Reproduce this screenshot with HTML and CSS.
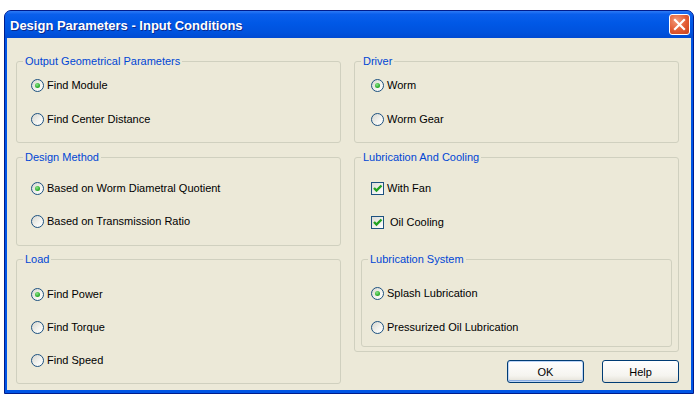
FILE: index.html
```html
<!DOCTYPE html>
<html lang="en">
<head>
  <meta charset="UTF-8" />
  <title>Design Parameters - Input Conditions</title>
  <link rel="stylesheet" href="styles.css">
</head>
<body>
  <div class="window">
    <div class="titlebar">
      <span class="title">Design Parameters - Input Conditions</span>
      <span class="close">
        <svg width="13" height="13" viewBox="0 0 13 13">
          <path d="M2 2 L11 11 M11 2 L2 11" stroke="#fff" stroke-width="2.2" stroke-linecap="square" fill="none"/>
        </svg>
      </span>
    </div>

    <div class="content">
      <div class="column">
        <div class="group g-output">
          <span class="legend">Output Geometrical Parameters</span>
          <label class="option"><span class="radio checked"></span>Find Module</label>
          <label class="option"><span class="radio"></span>Find Center Distance</label>
        </div>

        <div class="group g-method">
          <span class="legend">Design Method</span>
          <label class="option"><span class="radio checked"></span>Based on Worm Diametral Quotient</label>
          <label class="option"><span class="radio"></span>Based on Transmission Ratio</label>
        </div>

        <div class="group g-load">
          <span class="legend">Load</span>
          <label class="option"><span class="radio checked"></span>Find Power</label>
          <label class="option"><span class="radio"></span>Find Torque</label>
          <label class="option"><span class="radio"></span>Find Speed</label>
        </div>
      </div>

      <div class="column">
        <div class="group g-driver">
          <span class="legend">Driver</span>
          <label class="option"><span class="radio checked"></span>Worm</label>
          <label class="option"><span class="radio"></span>Worm Gear</label>
        </div>

        <div class="group g-cooling">
          <span class="legend">Lubrication And Cooling</span>
          <label class="option"><span class="check"><svg width="11" height="11" viewBox="0 0 11 11"><path d="M2 5 L4.5 7.5 L9.5 2.5" stroke="#21A121" stroke-width="2.4" fill="none"/></svg></span>With Fan</label>
          <label class="option"><span class="check"><svg width="11" height="11" viewBox="0 0 11 11"><path d="M2 5 L4.5 7.5 L9.5 2.5" stroke="#21A121" stroke-width="2.4" fill="none"/></svg></span> Oil Cooling</label>

          <div class="group g-lubsys">
            <span class="legend">Lubrication System</span>
            <label class="option"><span class="radio checked"></span>Splash Lubrication</label>
            <label class="option"><span class="radio"></span>Pressurized Oil Lubrication</label>
          </div>
        </div>

        <div class="buttons">
          <button class="btn default">OK</button>
          <button class="btn">Help</button>
        </div>
      </div>
    </div>
  </div>
</body>
</html>
```

FILE: styles.css
```css
:root {
  --face: #ECE9D8;
  --frame: #0055E5;
  --legend: #0046D5;
  --group-line: #D0D0BF;
  --control-line: #1C5180;
}

* {
  box-sizing: border-box;
}

body {
  margin: 0;
  background: #fff;
  font-family: 'Liberation Sans', Arial, sans-serif;
  font-size: 11px;
  color: #000;
}

.window {
  margin: 10px 0 0 4px;
  width: 690px;
  height: 384px;
  border: 1px solid #001C8C;
  border-radius: 7px 7px 0 0;
  background: var(--frame);
  display: flex;
  flex-direction: column;
}

.titlebar {
  height: 27px;
  display: flex;
  align-items: center;
  justify-content: space-between;
  padding: 0 3px 0 5px;
  border-radius: 6px 6px 0 0;
  background: linear-gradient(#2E7BF5 0%, #0A5FEC 12%, #0058E6 45%, #0052DD 80%, #004AD2 100%);
}

.title {
  color: #fff;
  font-weight: bold;
  font-size: 13px;
  padding-top: 2px;
  text-shadow: 1px 1px 0 #0A2A8E;
}

.close {
  width: 21px;
  height: 21px;
  border: 1px solid #fff;
  border-radius: 3px;
  background: radial-gradient(circle at 35% 30%, #F29A7A, #E25A32 55%, #C8421C);
  display: flex;
  align-items: center;
  justify-content: center;
}

.content {
  flex: 1;
  margin: 0 2px 3px;
  background: var(--face);
  padding: 23px 0 0 9px;
  display: grid;
  grid-template-columns: 325px 325px;
  column-gap: 13px;
  align-content: start;
}

.column {
  display: flex;
  flex-direction: column;
}

.group {
  position: relative;
  border: 1px solid var(--group-line);
  border-radius: 3px;
  display: flex;
  flex-direction: column;
}

.legend {
  position: absolute;
  top: -7px;
  left: 6px;
  padding: 0 2px;
  line-height: 13px;
  background: var(--face);
  color: var(--legend);
}

.g-output {
  height: 82px;
  margin-bottom: 14px;
  padding: 17px 0 0 14px;
  gap: 21px;
}

.g-method {
  height: 89px;
  margin-bottom: 13px;
  padding: 24px 0 0 14px;
  gap: 20px;
}

.g-load {
  height: 125px;
  padding: 28px 0 0 14px;
  gap: 20px;
}

.g-driver {
  height: 82px;
  margin-bottom: 14px;
  padding: 17px 0 0 16px;
  gap: 21px;
}

.g-cooling {
  height: 195px;
  padding: 24px 0 0 16px;
  gap: 21px;
}

.g-lubsys {
  height: 88px;
  margin: 9px 6px 0 -10px;
  padding: 27px 0 0 9px;
  gap: 21px;
}

.option {
  display: flex;
  align-items: center;
  gap: 3px;
  height: 13px;
  line-height: 13px;
  white-space: pre;
}

.radio {
  width: 13px;
  height: 13px;
  flex: none;
  border: 1px solid var(--control-line);
  border-radius: 50%;
  background: linear-gradient(135deg, #D6D6CF, #F4F4F0 60%, #fff);
  display: flex;
  align-items: center;
  justify-content: center;
}

.radio.checked::after {
  content: "";
  width: 5px;
  height: 5px;
  border-radius: 50%;
  background: radial-gradient(circle at 40% 35%, #8CE38C, #2DAE2D 60%, #1B8F1B);
}

.check {
  width: 13px;
  height: 13px;
  flex: none;
  border: 1px solid var(--control-line);
  background: linear-gradient(135deg, #DCDCD7, #fff);
  display: flex;
  align-items: center;
  justify-content: center;
}

.buttons {
  display: flex;
  justify-content: flex-end;
  gap: 18px;
  margin-top: 8px;
}

.btn {
  width: 77px;
  height: 23px;
  border: 1px solid #003C74;
  border-radius: 3px;
  background: linear-gradient(#FFFFFF, #F5F4EF 70%, #E3E0D6);
  font-family: inherit;
  font-size: 11px;
  color: #000;
  padding: 0;
}

.btn.default {
  box-shadow: inset 0 0 0 1px #BCD4F6, inset 0 -1px 0 1px #89ADE4;
}
```
